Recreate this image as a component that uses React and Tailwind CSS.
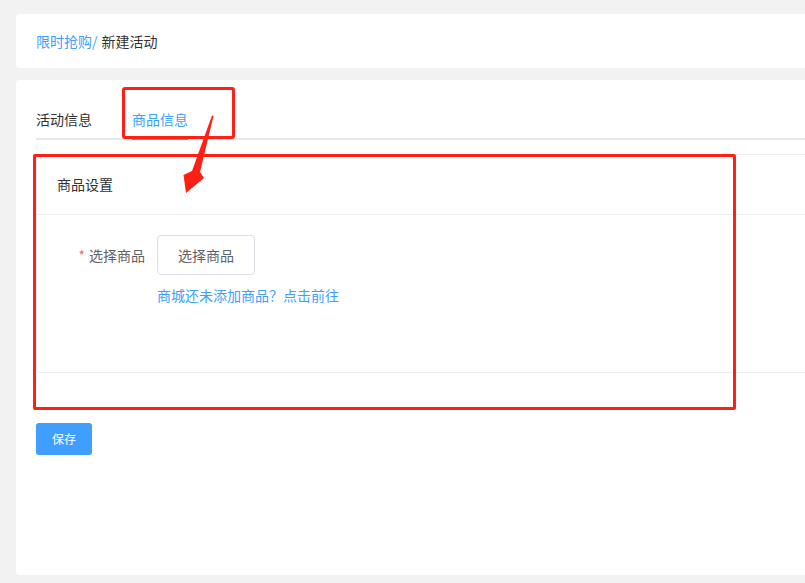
import React from "react";

export default function App() {
  return (
    <div
      className="relative w-[805px] h-[583px] overflow-hidden bg-[#f2f2f2]"
      style={{ fontFamily: '"Noto Sans CJK SC", "Noto Sans", sans-serif' }}
    >
      <div className="pt-[14px] pl-4">
        {/* breadcrumb card */}
        <div className="w-[1000px] h-[54px] bg-white rounded-[4px] flex items-center pl-5 text-[14px]">
          <span className="text-[#409eff]">限时抢购/</span>
          <span className="text-[#303133] ml-[4px]">新建活动</span>
        </div>

        {/* main card */}
        <div className="mt-3 w-[1000px] h-[495px] bg-white rounded-[4px] pt-[20px] pl-5">
          {/* tabs */}
          <div className="flex h-[40px] border-b-2 border-[#e4e7ed] text-[14px]">
            <div className="relative h-full flex items-center text-[#303133]">活动信息</div>
            <div className="relative h-full flex items-center ml-10 text-[#409eff]">
              商品信息
              <div className="absolute left-0 right-0 bottom-[-2px] h-[2px] bg-[#409eff]" />
            </div>
          </div>

          {/* goods setting card */}
          <div className="mt-[14px] border border-[#ebeef5] rounded-[4px]">
            <div className="h-[60px] flex items-center pl-5 border-b border-[#ebeef5] text-[14px] text-[#303133]">
              商品设置
            </div>
            <div className="pt-5 pl-5 h-[157px]">
              <div className="flex">
                <div className="w-[100px] pr-3 h-[40px] flex items-center justify-end text-[14px] text-[#606266]">
                  <span className="text-[#f56c6c] mr-[4px]">*</span>
                  选择商品
                </div>
                <div>
                  <div className="w-[98px] h-[40px] border border-[#dcdfe6] rounded-[4px] flex items-center justify-center text-[14px] text-[#606266]">
                    选择商品
                  </div>
                  <div className="mt-[10px] text-[14px] leading-[20px] text-[#409eff]">
                    商城还未添加商品？点击前往
                  </div>
                </div>
              </div>
            </div>
          </div>

          {/* save */}
          <div className="mt-[50px] w-[56px] h-[32px] rounded-[3px] bg-[#409eff] text-white text-[12px] flex items-center justify-center">
            保存
          </div>
        </div>
      </div>

      {/* annotations */}
      <div className="absolute left-[122px] top-[87px] w-[113px] h-[52px] border-[3px] border-[#ff1f14] rounded-[3px]" />
      <div className="absolute left-[33px] top-[154px] w-[703px] h-[256px] border-[3px] border-[#ff1f14] rounded-[2px]" />
      <svg className="absolute left-0 top-0" width="805" height="583" viewBox="0 0 805 583">
        <polygon
          points="213.5,116 200,172 204,178 186,193 183.5,175 192,171 212,115.5"
          fill="#ff1f14"
        />
      </svg>
    </div>
  );
}
